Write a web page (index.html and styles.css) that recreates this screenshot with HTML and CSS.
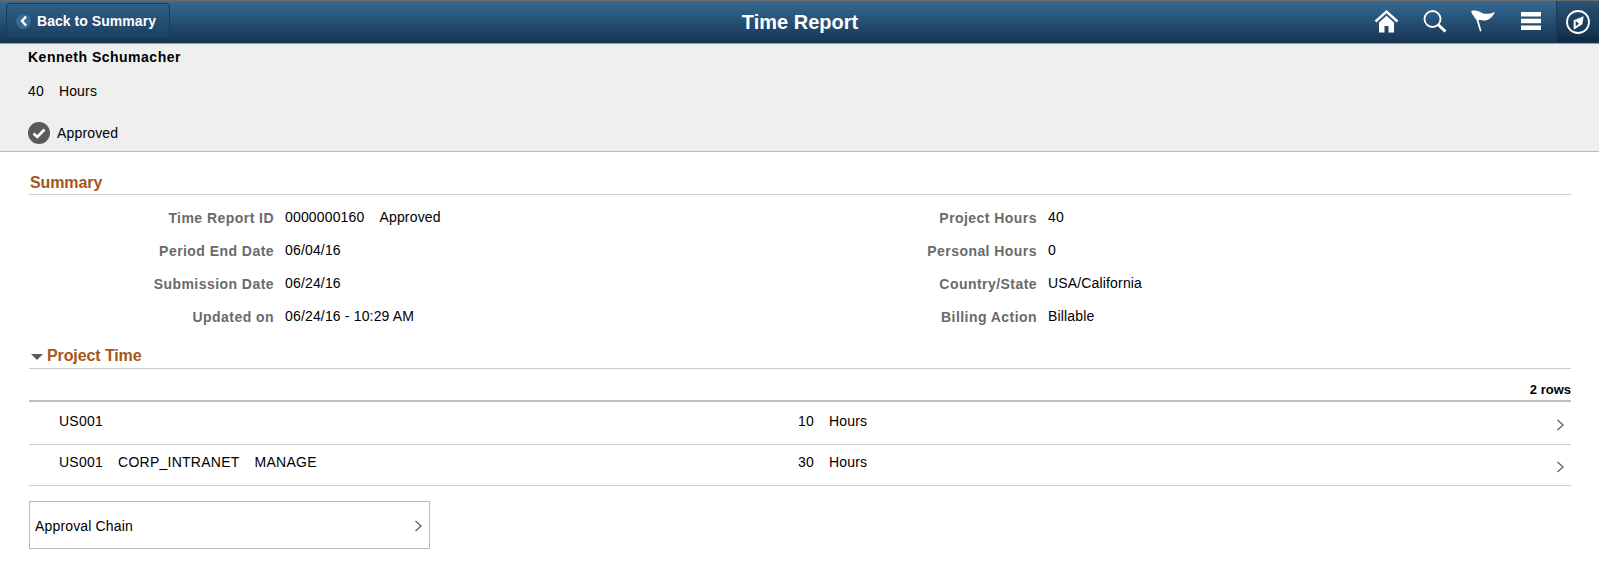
FILE: index.html
```html
<!DOCTYPE html>
<html lang="en">
<head>
<meta charset="utf-8">
<title>Time Report</title>
<link rel="stylesheet" href="styles.css">
</head>
<body>
<header class="topbar">
  <div class="topbar-left">
    <button class="back-btn" type="button">
      <span class="back-dot"><svg width="10" height="12" viewBox="0 0 10 12"><path d="M7 1.500 3 6l4 4.500" fill="none" stroke="#fff" stroke-width="2.400"/></svg></span>
      <span>Back to Summary</span>
    </button>
  </div>
  <h1 class="title">Time Report</h1>
  <nav class="topbar-icons">
    <svg class="ico" width="26" height="24" viewBox="0 0 26 24"><path d="M1.500 12.500 12.500 2.500l11 10" fill="none" stroke="#fff" stroke-width="2.400"/><path d="M5 13.500 12.500 6.800 20 13.500V23.500h-5.500V17h-4v6.500H5z" fill="#fff"/></svg>
    <svg class="ico" width="26" height="24" viewBox="0 0 26 24"><circle cx="10.500" cy="10" r="8" fill="none" stroke="#fff" stroke-width="1.800"/><path d="m16.500 16 7 6.500" stroke="#fff" stroke-width="3"/></svg>
    <svg class="ico" width="26" height="24" viewBox="0 0 26 24"><path d="M1 2C6 1 9 2 12 4C16 5.500 20 5 25 3 23 7 20 10.500 16 11.500 13 12 11 10.500 8.500 11L11.500 22 10 22.500 6.500 11C4 8 2 5 1 2z" fill="#fff"/></svg>
    <svg class="ico ico-last" width="26" height="24" viewBox="0 0 26 24"><path d="M3 3h20v4.500H3zM3 9.800h20v4.500H3zM3 16.500h20V21H3z" fill="#fff"/></svg>
    <span class="nav-tile"><svg width="26" height="26" viewBox="0 0 26 26"><circle cx="13" cy="13" r="11" fill="none" stroke="#fff" stroke-width="1.800"/><path d="M18.700 7.300 8.700 11.300v9.400l8.600-5.400z" fill="#fff"/><path d="M10.700 12v5.300l3.300-2.600z" fill="#1f3f5f"/></svg></span>
  </nav>
</header>

<section class="banner">
  <div class="banner-name">Kenneth Schumacher</div>
  <div class="banner-hours"><span>40</span><span>Hours</span></div>
  <div class="banner-status">
    <svg width="22" height="22" viewBox="0 0 22 22"><circle cx="11" cy="11" r="11" fill="#5a5a5a"/><path d="m5.500 11.500 3.800 3.500 7.200-7.500" fill="none" stroke="#fff" stroke-width="2.600"/></svg>
    <span>Approved</span>
  </div>
</section>

<main class="content">
  <h2 class="sec-head sec-summary">Summary</h2>
  <div class="summary-grid">
    <div class="s-col">
      <div class="s-row"><span class="s-label">Time Report ID</span><span class="s-val"><span>0000000160</span><span>Approved</span></span></div>
      <div class="s-row"><span class="s-label">Period End Date</span><span class="s-val">06/04/16</span></div>
      <div class="s-row"><span class="s-label">Submission Date</span><span class="s-val">06/24/16</span></div>
      <div class="s-row"><span class="s-label">Updated on</span><span class="s-val">06/24/16 - 10:29 AM</span></div>
    </div>
    <div class="s-col">
      <div class="s-row"><span class="s-label">Project Hours</span><span class="s-val">40</span></div>
      <div class="s-row"><span class="s-label">Personal Hours</span><span class="s-val">0</span></div>
      <div class="s-row"><span class="s-label">Country/State</span><span class="s-val">USA/California</span></div>
      <div class="s-row"><span class="s-label">Billing Action</span><span class="s-val">Billable</span></div>
    </div>
  </div>

  <h2 class="sec-head sec-project"><span class="caret"></span>Project Time</h2>
  <div class="rowcount">2 rows</div>
  <ul class="rows">
    <li class="row row-first"><span class="row-name"><span>US001</span></span><span class="row-num">10</span><span class="row-unit">Hours</span><svg class="chev" width="9" height="14" viewBox="0 0 9 14"><path d="m1.500 2 5.500 5-5.500 5" fill="none" stroke="#666" stroke-width="1.400"/></svg></li>
    <li class="row"><span class="row-name"><span>US001</span><span>CORP_INTRANET</span><span>MANAGE</span></span><span class="row-num">30</span><span class="row-unit">Hours</span><svg class="chev" width="9" height="14" viewBox="0 0 9 14"><path d="m1.500 2 5.500 5-5.500 5" fill="none" stroke="#666" stroke-width="1.400"/></svg></li>
  </ul>
  <div class="approval">
    <span>Approval Chain</span>
    <svg width="9" height="14" viewBox="0 0 9 14"><path d="m1.500 2 5.500 5-5.500 5" fill="none" stroke="#666" stroke-width="1.400"/></svg>
  </div>
</main>
</body>
</html>
```
FILE: styles.css
```css
* { box-sizing: border-box; }
html, body { margin: 0; padding: 0; }
body {
  background: #fff;
  color: #000;
  font-family: "Liberation Sans", Arial, sans-serif;
  font-size: 14px;
  line-height: 16px;
  letter-spacing: .16px;
}
.topbar {
  height: 44px;
  display: grid;
  grid-template-columns: 1fr auto 1fr;
  align-items: center;
  background: linear-gradient(#3a6a92 0, #2f5f86 20%, #163553 100%);
  border-top: 1px solid #6b6b6b;
  border-bottom: 1px solid #7ba3cf;
}
.topbar-left { padding-left: 6px; display: flex; }
.back-btn {
  width: 164px;
  height: 36px;
  margin-top: -2px;
  display: flex;
  align-items: center;
  gap: 6px;
  padding: 0 0 0 9px;
  background: linear-gradient(#2f5f86, #1c4060);
  border: 1px solid #1a3a58;
  border-radius: 3px;
  color: #fff;
  font: bold 14px/16px "Liberation Sans", Arial, sans-serif;
  letter-spacing: .05px;
}
.back-dot {
  width: 15px;
  height: 15px;
  border-radius: 50%;
  background: #3c6a96;
  display: flex;
  align-items: center;
  justify-content: center;
}
.title {
  margin: 0 0 0 1px;
  color: #fff;
  font-size: 20px;
  line-height: 24px;
  font-weight: bold;
  letter-spacing: 0;
}
.topbar-icons {
  display: flex;
  align-items: center;
  justify-content: flex-end;
  height: 100%;
}
.ico { margin: -2px 22px 0 0; }
.ico-last { margin-right: 12px; }
.nav-tile {
  position: relative;
  width: 43px;
  height: 42px;
  display: flex;
  align-items: center;
  justify-content: center;
  background: rgba(8, 24, 42, .28);
  border-left: 1px solid #1a3a58;
}
.nav-tile::after {
  content: "";
  position: absolute;
  left: 0;
  right: 0;
  bottom: 2px;
  height: 4px;
  background: repeating-conic-gradient(#0e2438 0 25%, transparent 0 50%) 0 0 / 2px 2px;
}
.banner {
  height: 108px;
  background: #efefef;
  border-bottom: 1px solid #b9b9b9;
  padding: 5px 28px 0;
}
.banner-name { font-weight: bold; height: 16px; letter-spacing: .5px; }
.banner-hours { margin-top: 18px; display: flex; gap: 15px; }
.banner-status { margin-top: 23px; display: flex; align-items: center; gap: 7px; }
.content { padding: 0 28px 0 29px; }
.sec-head {
  margin: 0;
  color: #a7561b;
  font-size: 16px;
  line-height: 18px;
  font-weight: bold;
  letter-spacing: -.1px;
  border-bottom: 1px solid #ccc;
}
.sec-summary { margin-top: 21px; height: 22px; padding: 1px 0 0 1px; }
.sec-project { margin-top: 6px; height: 22px; display: flex; align-items: flex-start; }
.caret {
  width: 0; height: 0;
  border-left: 6px solid transparent;
  border-right: 6px solid transparent;
  border-top: 6px solid #5a5a5a;
  margin: 7px 4px 0 2px;
}
.summary-grid { display: grid; grid-template-columns: 745px 1fr; margin-top: 14px; }
.s-row { display: flex; gap: 11px; height: 33px; }
.s-val { display: flex; gap: 15px; }
.s-label { width: 245px; text-align: right; font-weight: bold; color: #6a6a6a; padding-top: 1px; letter-spacing: .45px; }
.s-col:last-child .s-label { width: 263px; }
.rowcount { text-align: right; font-size: 13px; font-weight: bold; height: 33px; padding-top: 13px; border-bottom: 2px solid #bdbdbd; letter-spacing: 0; }
.rows { list-style: none; margin: 0; padding: 0; }
.row { display: flex; align-items: center; height: 41px; border-bottom: 1px solid #ccc; padding-bottom: 6px; }
.row-first { height: 43px; padding-bottom: 4px; }
.row-name { width: 764px; padding-left: 30px; display: flex; gap: 15px; letter-spacing: .25px; }
.row-num { width: 21px; text-align: right; }
.row-unit { margin-left: 15px; flex: 1; }
.chev { margin: 10px 6px 0 0; }
.row-first .chev { margin-top: 8px; }
.approval {
  width: 401px;
  height: 48px;
  margin-top: 15px;
  display: flex;
  align-items: center;
  justify-content: space-between;
  padding: 2px 6px 0 5px;
  border: 1px solid #b9b9b9;
}
```
